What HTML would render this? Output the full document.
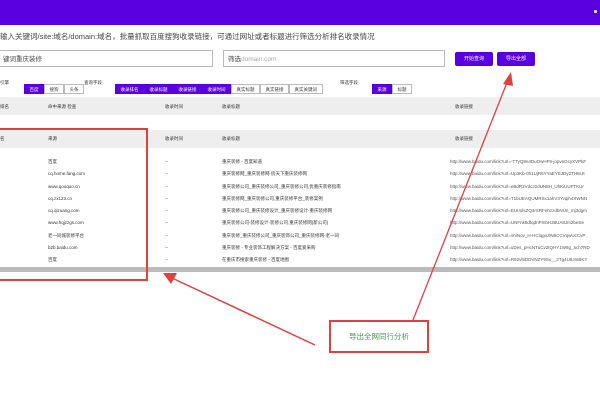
<!DOCTYPE html>
<html><head><meta charset="utf-8"><style>
body{margin:0;width:600px;height:400px;overflow:hidden;background:#fff;font-family:"Liberation Sans","Noto Sans CJK SC",sans-serif;position:relative;color:#333}
.a{position:absolute;white-space:nowrap}
.hdr{left:0;top:0;width:600px;height:25px;background:#5a00e0}
.inp{border:1px solid #bbb;height:17px;font-size:6.5px;line-height:17px;color:#444;padding-left:4px;box-sizing:border-box}
.btn{background:#5a00e0;color:#fff;font-size:5px;text-align:center;line-height:14px;height:14px;border-radius:2px}
.tag{font-size:4.5px;height:10px;line-height:10px;padding:0 4.5px;border:1px solid #bbb;display:inline-block;box-sizing:border-box}
.on{background:#5a00e0;color:#fff;border-color:#5a00e0}
.s{font-size:4.5px;color:#333}
.gr{background:#eee;left:0;width:600px}
</style></head><body>
<div class="a hdr"></div>
<div class="a" style="left:594px;top:10px;width:3px;height:3px;background:#ccc"></div>
<div class="a" style="left:0;top:31px;font-size:7.5px;color:#444">输入关键词/site:域名/domain:域名，批量抓取百度搜狗收录链接，可通过网址或者标题进行筛选分析排名收录情况</div>
<div class="a inp" style="left:-2px;top:50px;width:215px">键词重庆装修</div>
<div class="a inp" style="left:223px;top:50px;width:222px"><span>筛选</span><span style="color:#aaa">domain.com</span></div>
<div class="a btn" style="left:455px;top:52px;width:38px">开始查询</div>
<div class="a btn" style="left:497px;top:52px;width:38px">导出全部</div>
<div class="a s" style="left:0;top:80px">引擎</div>
<div class="a" style="left:24px;top:78px"><span class="tag on">百度</span><span class="tag">搜狗</span><span class="tag">头条</span></div>
<div class="a s" style="left:84px;top:80px">查询字段</div>
<div class="a" style="left:115px;top:78px"><span class="tag on">收录排名</span><span class="tag on">收录标题</span><span class="tag on">收录链接</span><span class="tag on">收录时间</span><span class="tag">真实标题</span><span class="tag">真实链接</span><span class="tag">真实关键词</span></div>
<div class="a s" style="left:340px;top:80px">筛选字段</div>
<div class="a" style="left:372px;top:78px"><span class="tag on">来源</span><span class="tag">标题</span></div>
<div class="a gr" style="top:97px;height:18px"></div>
<div class="a s" style="left:0;top:104px">排名</div>
<div class="a s" style="left:48px;top:104px">命中来源 检查</div>
<div class="a s" style="left:165px;top:104px">收录时间</div>
<div class="a s" style="left:222px;top:104px">收录标题</div>
<div class="a s" style="left:455px;top:104px">收录链接</div>
<div class="a gr" style="top:130px;height:18px"></div>
<div class="a s" style="left:0;top:136px">名</div>
<div class="a s" style="left:48px;top:136px">来源</div>
<div class="a s" style="left:165px;top:136px">收录时间</div>
<div class="a s" style="left:222px;top:136px">收录标题</div>
<div class="a s" style="left:455px;top:136px">收录链接</div>
<div class="a s" style="left:48px;top:156px;line-height:12.3px">百度<br>cq.home.fang.com<br>www.qooqoo.cn<br>cq.zx123.cn<br>cq.qizuang.com<br>www.hqjzzgs.com<br>老一同城装修平台<br>b2b.baidu.com<br>百度</div>
<div class="a s" style="left:165px;top:156px;line-height:12.3px">--<br>--<br>--<br>--<br>--<br>--<br>--<br>--<br>--</div>
<div class="a s" style="left:222px;top:156px;line-height:12.3px">重庆装修 - 百度知道<br>重庆装修网_重庆装修网-房天下重庆装修网<br>重庆装修公司_重庆装修公司_重庆装修公司,优重庆装修指南<br>重庆装修网_重庆装修公司,重庆装修平台_装修案例<br>重庆装修公司_重庆装修设计_重庆装修设计-重庆装修网<br>重庆装修公司-装修设计-装修公司,重庆装修网(新公司)<br>重庆装修_重庆装修公司_重庆装饰公司_重庆装修网-老一同<br>重庆装修 - 专业装饰工程解决方案 - 百度爱采购<br>在重庆市搜索重庆装修 - 百度地图</div>
<div class="a s" style="left:450px;top:156px;line-height:12.3px;color:#555">http://www.baidu.com/link?url=-TTyQ9n4DuOwHF9-jopvnGcyXVPkF<br>http://www.baidu.com/link?url=Up3Kb-0h1UjR5YYaEYEJDy2TH8rJt<br>http://www.baidu.com/link?url=eBdR2VdcJ2dUN8H_UhKiUUFTKUr<br>http://www.baidu.com/link?url=T1bUEAQUMRSx1ahV3Yvqih4XWNN<br>http://www.baidu.com/link?url=EUI4dsZQ3rSRFehzzdbNUn_mj3dgm<br>http://www.baidu.com/link?url=UNFnk8dfqdnPmbH38UA8Jm2beSe<br>http://www.baidu.com/link?url=ohiNov_H-HClqgozlN6CCVqwUcCvP<br>http://www.baidu.com/link?url=uDes_pHcNTuCv2tQHY1W8g_ach7RD<br>http://www.baidu.com/link?url=R52vl5DDVNZY9Su__2Tg4U8JmBKY</div>
<div class="a" style="left:0;top:267px;width:600px;height:5px;background:#bbb"></div>
<div class="a" style="left:-4px;top:128px;width:148px;height:149px;border:2px solid #e04040"></div>
<div class="a" style="left:329px;top:320px;width:96px;height:29px;border:2px solid #e04040;font-size:7.5px;color:#4a9a4a;text-align:center;line-height:29px">导出全网同行分析</div>
<svg class="a" style="left:0;top:0" width="600" height="400">
<line x1="413" y1="320" x2="508" y2="80" stroke="#e04040" stroke-width="1.3"/>
<polygon points="511,72 503,84 513,86" fill="#e04040"/>
<line x1="315" y1="345" x2="172" y2="278" stroke="#e04040" stroke-width="1.5"/>
<polygon points="163,273 177,273 171,284" fill="#e04040"/>
</svg>
</body></html>
